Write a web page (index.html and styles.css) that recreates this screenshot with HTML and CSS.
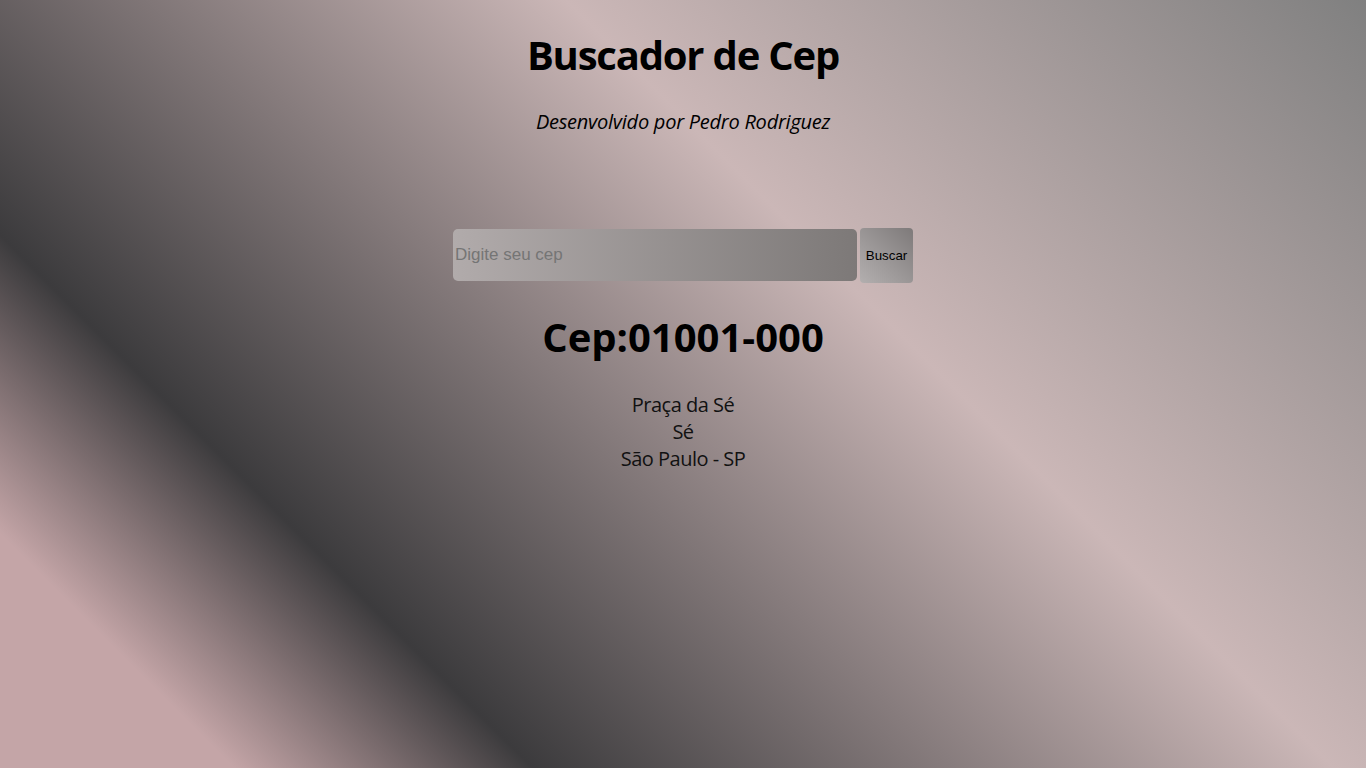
FILE: index.html
```html
<!DOCTYPE html>
<html lang="pt-BR">
<head>
<meta charset="utf-8">
<title>Buscador de Cep</title>
<link rel="stylesheet" href="styles.css">
</head>
<body>
  <main class="app">
    <h1 class="title">Buscador de Cep</h1>
    <p class="subtitle">Desenvolvido por Pedro Rodriguez</p>
    <form class="search">
      <input class="search-input" type="text" placeholder="Digite seu cep">
      <button class="search-btn" type="button">Buscar</button>
    </form>
    <section class="result">
      <h2 class="result-cep">Cep:01001-000</h2>
      <span class="result-line">Praça da Sé</span>
      <span class="result-line">Sé</span>
      <span class="result-line">São Paulo - SP</span>
    </section>
  </main>
</body>
</html>
```

FILE: styles.css
```css
html, body {
  margin: 0;
  padding: 0;
  height: 100%;
}

body {
  font-family: "Open Sans", "Noto Sans", sans-serif;
  color: #000;
  background: linear-gradient(45deg, #c4a5a7 0%, #c4a5a7 11%, #3c3b3d 25%, #cbb7b7 62.5%, #808080 100%);
  min-height: 100vh;
}

.app {
  display: flex;
  flex-direction: column;
  align-items: center;
}

.title {
  margin: 0;
  padding-top: 28px;
  font-size: 40px;
  line-height: 54px;
  font-weight: 700;
  letter-spacing: -1.2px;
}

.subtitle {
  margin: 26px 0 0;
  font-size: 20px;
  line-height: 27px;
  font-style: italic;
  letter-spacing: -0.25px;
}

.search {
  margin-top: 93px;
  display: flex;
  align-items: flex-start;
  gap: 3px;
}

.search-input {
  width: 404px;
  height: 52px;
  margin-top: 1px;
  box-sizing: border-box;
  border: none;
  border-radius: 5px;
  padding: 0 2px;
  font-family: Arial, "Liberation Sans", sans-serif;
  font-size: 17px;
  color: #000;
  background: linear-gradient(to right, #b1abab, #7d7978);
  outline: none;
}

.search-input::placeholder {
  color: #757575;
}

.search-btn {
  width: 53px;
  height: 55px;
  border: none;
  border-radius: 4px;
  padding: 0;
  font-family: Arial, "Liberation Sans", sans-serif;
  font-size: 13.33px;
  color: #000;
  background: linear-gradient(45deg, #b3afaf, #7e7a7a);
  cursor: pointer;
}

.result {
  display: flex;
  flex-direction: column;
  align-items: center;
}

.result-cep {
  margin: 27px 0 0;
  font-size: 40px;
  line-height: 54px;
  font-weight: 700;
}

.result-line {
  font-size: 20px;
  line-height: 27px;
  color: #111;
  letter-spacing: -0.5px;
}

.result-cep + .result-line {
  margin-top: 27px;
}
```
